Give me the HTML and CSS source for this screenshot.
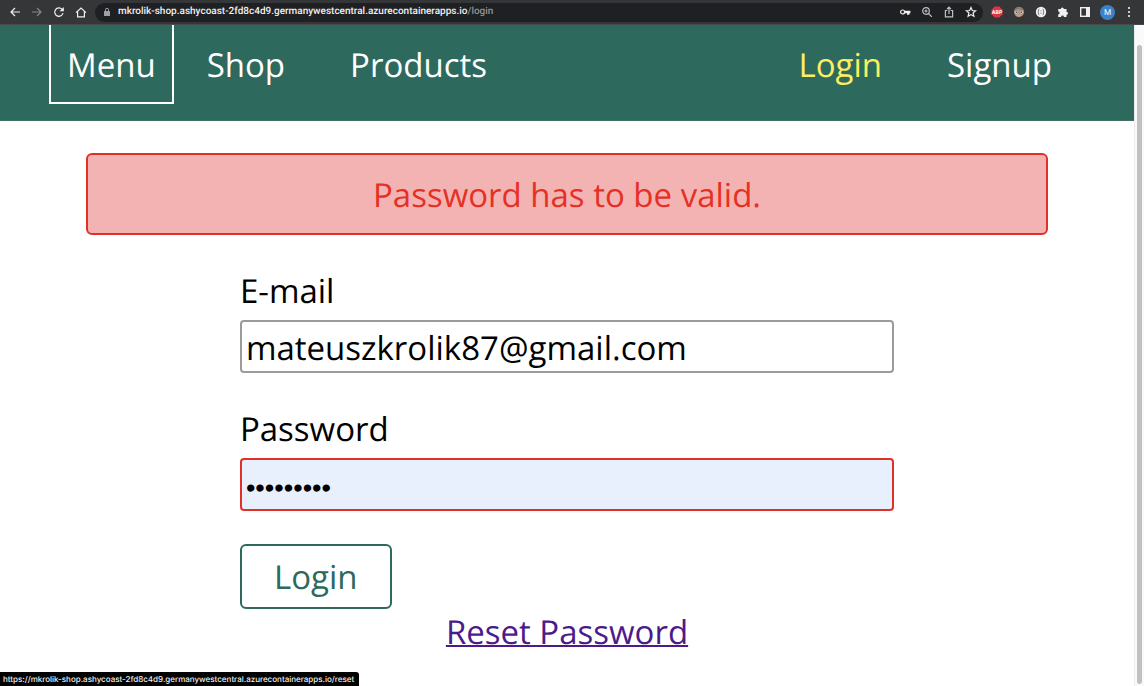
FILE: index.html
```
<!DOCTYPE html>
<html lang="en">
<head>
<meta charset="utf-8">
<title>Login</title>
<link rel="stylesheet" href="styles.css">
</head>
<body>
<div class="browser">
  <div class="toolbar">
    <div class="toolbar-nav">
      <button class="tool" aria-label="Back"><svg viewBox="0 0 12 12"><path d="M11 6H2M6 2 2 6l4 4"/></svg></button>
      <button class="tool tool-dim" aria-label="Forward"><svg viewBox="0 0 12 12"><path d="M1 6h9M6 2l4 4-4 4"/></svg></button>
      <button class="tool" aria-label="Reload"><svg viewBox="0 0 12 12"><path d="M10 7.2A4.2 4.2 0 1 1 9 3.2L10.2 4.4"/><path class="solid" d="M10.8 1v4.2H6.6z"/></svg></button>
      <button class="tool" aria-label="Home"><svg viewBox="0 0 12 12"><path d="M1 6.600 6 2l5 4.600M2.600 5.600v5.200h6.800V5.600"/></svg></button>
    </div>
    <div class="address">
      <svg class="lock" viewBox="0 0 8 10"><rect x="1" y="4" width="6" height="5" rx=".6"/><path d="M2.500 4V2.800a1.500 1.500 0 0 1 3 0V4"/></svg>
      <span class="url">mkrolik-shop.ashycoast-2fd8c4d9.germanywestcentral.azurecontainerapps.io<span class="url-path">/login</span></span>
      <div class="address-tools">
        <button class="tool" aria-label="Passwords"><svg viewBox="0 0 12 12"><circle cx="3.600" cy="6" r="2"/><path d="M5.600 5.400h5.200v1.200H9.800v1.600H8.600V6.600h-3"/></svg></button>
        <button class="tool tool-soft" aria-label="Zoom"><svg viewBox="0 0 12 12"><circle cx="5" cy="5" r="3.300"/><path d="M7.500 7.500 10.800 10.800M3.400 5h3.200M5 3.400v3.200"/></svg></button>
        <button class="tool tool-soft" aria-label="Share"><svg viewBox="0 0 12 12"><path d="M4.300 4.500H2.400v6.300h7.200V4.500H7.700M6 8V1.400M4 3.200l2-2 2 2"/></svg></button>
        <button class="tool" aria-label="Bookmark"><svg viewBox="0 0 12 12"><path d="m6 1.500 1.300 3 3.300.3-2.500 2.200.8 3.300L6 8.600l-2.900 1.700.8-3.300L1.400 4.800l3.300-.3z"/></svg></button>
      </div>
    </div>
    <div class="extensions">
      <button class="tool" aria-label="Adblock Plus"><svg viewBox="0 0 12 12"><path class="abp" d="M3.700.5h4.600l3.200 3.200v4.600l-3.200 3.200H3.700L.5 8.300V3.700z"/><text class="abp-text" x="6" y="7.800">ABP</text></svg></button>
      <button class="tool" aria-label="Avatar extension"><svg viewBox="0 0 12 12"><circle class="face" cx="6" cy="6" r="5"/><path class="hair" d="M1.300 4.500a5 5 0 0 1 9.400 0L8 3.500H4z"/><circle class="lens" cx="3.600" cy="6.300" r="1.900"/><circle class="lens" cx="8.400" cy="6.300" r="1.900"/><circle class="pupil" cx="3.700" cy="6.300" r=".8"/><circle class="pupil" cx="8.300" cy="6.300" r=".8"/></svg></button>
      <button class="tool" aria-label="JSON viewer"><svg viewBox="0 0 12 12"><circle class="solid" cx="6" cy="6" r="5.200"/><path class="braces" d="M4.300 3.200c-1.500 0 0 2.200-1.500 2.800 1.500.6 0 2.800 1.500 2.800M7.700 3.200c1.500 0 0 2.200 1.500 2.800-1.500.6 0 2.800-1.500 2.800M6 4.500v.8M6 6.700v1"/></svg></button>
      <button class="tool" aria-label="Extensions"><svg viewBox="0 0 12 12"><path class="solid" d="M1.200 3h2.600a1.500 1.500 0 1 1 3 0h2.700v2.700a1.500 1.500 0 1 1 0 3V11H6.900a1.400 1.400 0 0 0-2.800 0H1.200V8.400a1.400 1.400 0 0 0 0-2.800z"/></svg></button>
      <button class="tool" aria-label="Side panel"><svg viewBox="0 0 12 12"><rect class="panel" x="1.700" y="1.700" width="8.600" height="8.600"/><path class="solid" d="M7 1h4v10H7z"/></svg></button>
      <button class="profile" aria-label="Profile">M</button>
      <button class="tool" aria-label="Browser menu"><svg viewBox="0 0 12 12"><circle class="solid" cx="6" cy="2" r="1.100"/><circle class="solid" cx="6" cy="6" r="1.100"/><circle class="solid" cx="6" cy="10" r="1.100"/></svg></button>
    </div>
  </div>
  <div class="viewport">
    <div class="page">
      <header class="site-header">
        <button class="menu-button">Menu</button>
        <nav class="site-nav">
          <a href="/">Shop</a>
          <a href="/products">Products</a>
        </nav>
        <nav class="site-nav">
          <a class="active" href="/login">Login</a>
          <a href="/signup">Signup</a>
        </nav>
      </header>
      <main class="content">
        <p class="alert" role="alert">Password has to be valid.</p>
        <form class="login-form">
          <div class="field">
            <label for="email">E-mail</label>
            <input id="email" type="email" value="mateuszkrolik87@gmail.com">
          </div>
          <div class="field">
            <label for="password">Password</label>
            <input class="invalid" id="password" type="password" value="secret123">
          </div>
          <button class="submit" type="submit">Login</button>
        </form>
        <a class="reset" href="/reset">Reset Password</a>
      </main>
    </div>
    <div class="scrollbar"><div class="thumb"></div></div>
  </div>
  <div class="status">https://mkrolik-shop.ashycoast-2fd8c4d9.germanywestcentral.azurecontainerapps.io/reset</div>
</div>
</body>
</html>
```
FILE: styles.css
```
* { box-sizing: border-box; }
body { margin: 0; font-family: "Open Sans", sans-serif; font-size: 33px; line-height: 44px; color: #000; background: #fff; text-rendering: geometricPrecision; }
button, input { font: inherit; text-rendering: inherit; }
.browser { display: flex; flex-direction: column; height: 100vh; overflow: hidden; }

.toolbar { display: flex; align-items: center; gap: 8px; height: 25px; flex: none; padding: 0 9px; background: #353638; border-bottom: 1px solid #47494a; font-family: Inter, sans-serif; }
.toolbar-nav, .address-tools, .extensions { display: flex; align-items: center; gap: 10px; }
.tool { display: flex; width: 12px; height: 12px; padding: 0; border: 0; background: none; color: #f0f0f0; }
.tool-dim { color: #858687; }
.tool-soft { color: #c0c1c2; }
.tool svg { width: 12px; height: 12px; fill: none; stroke: currentColor; stroke-width: 1.2; }
.tool .solid { fill: currentColor; stroke: none; }
.tool .panel { stroke-width: 1.4; }
.tool .abp { fill: #dc3545; stroke: none; }
.tool .abp-text { fill: #fff; stroke: none; font: bold 5px Inter, sans-serif; text-anchor: middle; }
.tool .face { fill: #c99b7c; stroke: none; }
.tool .hair { fill: #8c7766; stroke: none; }
.tool .lens { fill: #d8e0e3; stroke: #657077; stroke-width: .6; }
.tool .pupil { fill: #28323a; stroke: none; }
.tool .braces { stroke: #35363a; stroke-width: .7; }
.address { display: flex; align-items: center; flex: 1; height: 19px; padding: 0 6px 0 8px; border-radius: 10px; background: #1f2023; }
.lock { width: 8px; height: 10px; margin-right: 7px; fill: #a0a1a3; stroke: none; }
.lock path { fill: none; stroke: #a0a1a3; }
.url { flex: 1; font-family: Roboto, sans-serif; font-size: 10px; font-weight: 500; line-height: 14px; white-space: nowrap; color: #f0f0f0; }
.url-path { color: #929395; }
.profile { width: 15px; height: 15px; margin: 0 -2px 0 -1px; padding: 0; border: 0; border-radius: 50%; background: #3c82c8; color: #fff; font-size: 8px; line-height: 15px; text-align: center; }

.viewport { display: flex; flex: 1; min-height: 0; }
.page { flex: 1; min-width: 0; overflow: hidden; }
.site-header { display: flex; align-items: flex-start; gap: 33px; padding: 0 82px 16px 49px; background: #2d695d; border-bottom: 1px solid #3e7267; }
.menu-button { padding: 18px 16px 15px; border: 2px solid #fff; border-top: 0; background: none; color: #fff; line-height: 44px; }
.site-nav { display: flex; gap: 65px; padding-top: 18px; }
.site-nav:last-child { margin-left: auto; }
.site-nav a { color: #fff; text-decoration: none; }
.site-nav .active { color: #fbee60; }

.content { display: flex; flex-direction: column; align-items: center; padding: 32px 86px; }
.alert { width: 100%; margin: 0 0 33px; padding: 18px 17px 16px; border: 2px solid #e03128; border-radius: 6px; background: #f4b3b3; color: #e53125; text-align: center; }
.login-form { width: 68%; }
.field { display: flex; flex-direction: column; gap: 6px; margin-bottom: 33px; line-height: 46px; }
.field input { width: 100%; height: 53px; padding: 3px 4px 2px; border: 2px solid #9b9b9b; border-radius: 4px; background: #fff; color: #000; outline: 0; }
.field .invalid { padding-top: 9px; border-color: #e03128; background: #e8effd; font-family: "Liberation Sans", sans-serif; font-size: 27px; }
.submit { display: block; height: 65px; padding: 0 32px; border: 2px solid #2d695d; border-radius: 6px; background: #fff; color: #2d695d; }
.reset { color: #4b1a8c; line-height: 46px; text-decoration-thickness: 2px; }

.scrollbar { width: 10px; padding: 20px 2px 2px; background: #fafafa; border-left: 1px solid #ececec; }
.thumb { height: 100%; border-radius: 4px; background: #c1c1c1; }
.status { position: absolute; left: 0; bottom: 0; padding: 1px 5px 1px 3px; border-radius: 0 3px 0 0; background: #000; color: #f0f0f0; font: 500 8px/12px Inter, sans-serif; white-space: nowrap; }
```
